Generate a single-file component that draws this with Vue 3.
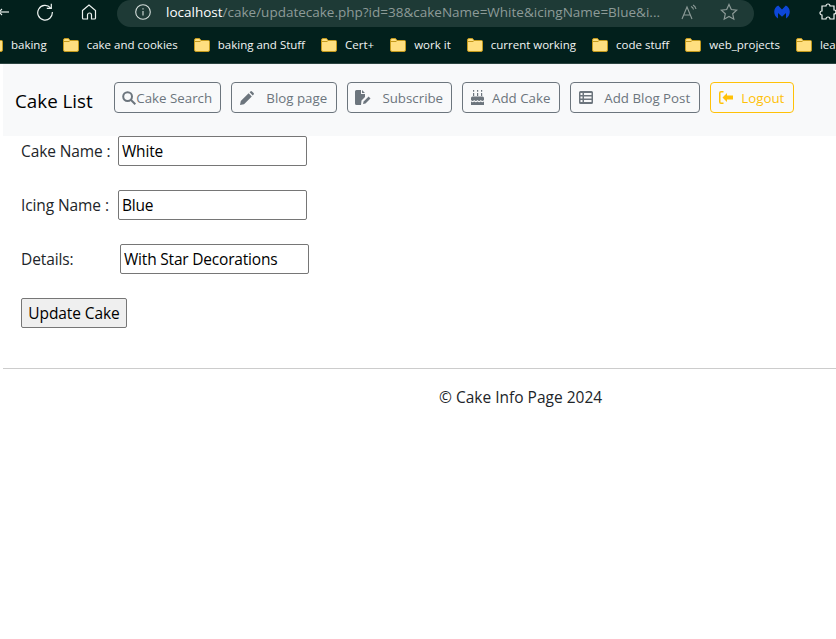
<script setup>
const bookmarks = ["baking", "cake and cookies", "baking and Stuff", "Cert+", "work it", "current working", "code stuff", "web_projects", "lea"];
// gap = afstand icoon-tekst, per knop anders in het origineel
const navButtons = [
  { label: "Cake Search", icon: "search", gap: 0, width: 107 },
  { label: "Blog page", icon: "pencil", gap: 12, width: 106 },
  { label: "Subscribe", icon: "file", gap: 11, width: 105 },
  { label: "Add Cake", icon: "cake", gap: 8, width: 98 },
  { label: "Add Blog Post", icon: "table", gap: 11, width: 130 },
  { label: "Logout", icon: "logout", gap: 8, width: 84, warn: true },
];
</script>

<template>
  <div class="page">
    <header class="browser">
      <div class="toolbar">
        <svg class="back" width="10" height="14" viewBox="0 0 10 14" fill="none" stroke="#e8eeec" stroke-width="1.2">
          <path d="M0 7h9" />
          <path d="M2 4L-1 7l3 3" />
        </svg>
        <svg class="reload" width="18" height="18" viewBox="0 0 18 18" fill="none" stroke="#eef3f1" stroke-width="1.2">
          <path d="M14.6 5A7.300 7.300 0 1 0 16.300 9" />
          <path d="M15.300 .8V5.300h-4.500" />
        </svg>
        <svg class="home" width="18" height="18" viewBox="0 0 18 18" fill="none" stroke="#eef3f1" stroke-width="1.2">
          <path d="M2.500 7.500L9 2l6.500 5.500V15a1 1 0 0 1-1 1h-3v-4a2 2 0 0 0-4 0v4H3.500a1 1 0 0 1-1-1z" />
        </svg>
        <div class="url-pill">
          <svg class="info" width="16" height="16" viewBox="0 0 16 16" fill="none" stroke="#d5dedb" stroke-width="1.100">
            <circle cx="8" cy="8" r="7.300" />
            <path d="M8 7v4.500M8 4.200v1.300" />
          </svg>
          <span class="url"><b>localhost</b>/cake/updatecake.php?id=38&amp;cakeName=White&amp;icingName=Blue&amp;i...</span>
          <svg class="read" width="16" height="16" viewBox="0 0 16 16" fill="none" stroke="#8d9b98" stroke-width="1.100">
            <path d="M1 15L6 3l5 12M3 11h6" />
            <path d="M10 2.500a4 4 0 0 1 2.500 3M12 1a6 6 0 0 1 3 4" />
          </svg>
          <svg class="star" width="18" height="18" viewBox="0 0 18 18" fill="none" stroke="#8d9b98" stroke-width="1.200">
            <path d="M9 1.500l2.300 5 5.400.6-4 3.700 1.100 5.400L9 13.500l-4.800 2.700 1.100-5.400-4-3.700 5.400-.6z" />
          </svg>
        </div>
        <svg class="malware" width="16" height="14" viewBox="0 0 16 14">
          <path d="M8 4.500L4.200.6C1.800 1.700.2 4 .2 6.800c0 2.800 1.500 5.300 3.800 6.700V8l4 3.800L12 8v5.500c2.300-1.400 3.800-3.900 3.800-6.700 0-2.800-1.600-5.100-4-6.200z" fill="#0d47d9" />
        </svg>
        <svg class="puzzle" width="18" height="18" viewBox="0 0 18 18" fill="none" stroke="#f0f4f2" stroke-width="1.200">
          <path d="M7 3a2 2 0 1 1 4 0h4v4a2 2 0 1 1 0 4v5h-4a2 2 0 1 0-4 0H3v-4a2 2 0 1 1 0-4V3z" />
        </svg>
      </div>
      <div class="bookmarks">
        <div v-for="b in bookmarks" :key="b" class="bookmark">
          <svg width="16" height="14" viewBox="0 0 16 14">
            <path d="M.5 2A1.500 1.500 0 0 1 2 .5h3.500L7 2.500h7.500a1 1 0 0 1 1 1V12a1.500 1.500 0 0 1-1.500 1.500H2A1.500 1.500 0 0 1 .5 12z" fill="#ffdf80" stroke="#c49a1c" />
            <path d="M1 3.500h5.500" stroke="#c49a1c" fill="none" />
          </svg>
          <span>{{ b }}</span>
        </div>
      </div>
    </header>

    <nav class="navbar">
      <a class="brand">Cake List</a>
      <div class="nav-btns">
        <button
          v-for="btn in navButtons"
          :key="btn.label"
          class="nav-btn"
          :class="{ warn: btn.warn }"
          :style="{ gap: btn.gap + 'px', width: btn.width + 'px' }"
        >
          <svg v-if="btn.icon === 'search'" width="14" height="14" viewBox="0 0 14 14" fill="none" stroke="currentColor" stroke-width="2">
            <circle cx="5.600" cy="5.600" r="4.400" />
            <path d="M9 9l4.300 4.300" />
          </svg>
          <svg v-if="btn.icon === 'pencil'" width="14" height="14" viewBox="0 0 14 14" fill="currentColor">
            <path d="M0 14l.8-4L8.600 2.200l3.200 3.200L4 13.200zM9.600 1.200l.8-.8a1.200 1.200 0 0 1 1.600 0l1.600 1.600a1.200 1.200 0 0 1 0 1.600l-.8.800z" />
          </svg>
          <svg v-if="btn.icon === 'file'" width="16" height="15" viewBox="0 0 16 15" fill="currentColor">
            <path d="M0 1.500A1.500 1.500 0 0 1 1.500 0H6v4h4v3l-3.500 3.500L6 15H1.500A1.500 1.500 0 0 1 0 13.500zM7 0l3 3H7z" />
            <path d="M8 14l.6-2.500 5-5 1.900 1.900-5 5z" />
          </svg>
          <svg v-if="btn.icon === 'cake'" width="13" height="15" viewBox="0 0 13 15" fill="currentColor">
            <path d="M2 0h1.200v1.800H2zM6 0h1.200v1.800H6zM10 0h1.200v1.800H10zM2 3h1.200v3H2zM6 3h1.200v3H6zM10 3h1.200v3H10z" />
            <path d="M1.500 6.500h10A1.500 1.500 0 0 1 13 8v2c-1.300 1.200-2 1.200-3.200 0-1.100 1.200-2.100 1.200-3.300 0-1.100 1.200-2.100 1.200-3.300 0C2 11.200 1.300 11.200 0 10V8a1.500 1.500 0 0 1 1.500-1.500zM0 11.500c1.500 1 2.200 1 3.200 0 1.100 1 2.200 1 3.300 0 1.100 1 2.200 1 3.300 0 1 1 1.700 1 3.200 0V15H0z" />
          </svg>
          <svg v-if="btn.icon === 'table'" width="14" height="13" viewBox="0 0 14 13" fill="currentColor">
            <path fill-rule="evenodd" d="M1.500 0h11A1.500 1.500 0 0 1 14 1.500v10a1.500 1.500 0 0 1-1.500 1.500h-11A1.500 1.500 0 0 1 0 11.500v-10A1.500 1.500 0 0 1 1.500 0zM1.500 2v2h2V2zm0 3.500v2h2v-2zm0 3.500v2h2V9zM5 2v2h7.500V2zm0 3.500v2h7.500v-2zM5 9v2h7.500V9z" />
          </svg>
          <svg v-if="btn.icon === 'logout'" width="14" height="13" viewBox="0 0 14 13" fill="currentColor">
            <path d="M4.500 0v1.500H2A.5.5 0 0 0 1.500 2v9a.5.5 0 0 0 .5.5h2.500V13H2a2 2 0 0 1-2-2V2a2 2 0 0 1 2-2z" />
            <path d="M3.500 6.500L8 2v2.500h6v4H8V11z" />
          </svg>
          <span>{{ btn.label }}</span>
        </button>
      </div>
    </nav>

    <form class="cake-form" @submit.prevent>
      <div class="field">
        <label class="field-label">Cake Name :</label>
        <input value="White" />
      </div>
      <div class="field">
        <label class="field-label">Icing Name :</label>
        <input value="Blue" />
      </div>
      <div class="field details">
        <label class="field-label">Details:</label>
        <input value="With Star Decorations" />
      </div>
      <button class="submit">Update Cake</button>
    </form>

    <footer class="footer">© Cake Info Page 2024</footer>
  </div>
</template>

<style scoped>
.page {
  width: 836px;
  height: 639px;
  overflow: hidden;
  background: #fff;
  color: #212529;
  font-family: "Open Sans", "Noto Sans", sans-serif;
}
.browser {
  height: 64px;
  box-sizing: border-box;
  background: #02201c;
  border-bottom: 1px solid #2c4541;
}
.toolbar {
  height: 24px;
  display: flex;
  align-items: center;
}
.toolbar > svg {
  flex-shrink: 0;
}
.back {
  overflow: visible;
}
.reload {
  margin-left: 26px;
}
.home {
  margin-left: 26px;
}
.url-pill {
  margin-left: 19px;
  width: 637px;
  height: 27px;
  flex-shrink: 0;
  margin-bottom: -3px;
  padding: 0 0 3px 18px;
  box-sizing: border-box;
  border-radius: 14px;
  background: #1e3a36;
  display: flex;
  align-items: center;
}
.url {
  margin-left: 15px;
  width: 515px;
  font-size: 13.5px;
  white-space: nowrap;
  color: #8d9b98;
}
.url b {
  color: #fff;
  font-weight: 400;
}
.read {
  flex-shrink: 0;
}
.star {
  flex-shrink: 0;
  margin-left: 23px;
}
.malware {
  margin-left: 20px;
}
.puzzle {
  margin-left: 29px;
}
.bookmarks {
  height: 39px;
  box-sizing: border-box;
  padding-top: 2px;
  display: flex;
  align-items: center;
  gap: 16px;
  margin-left: -13px;
  white-space: nowrap;
  font-size: 11.5px;
  color: #f2f5f4;
}
.bookmark {
  display: flex;
  align-items: center;
  gap: 8px;
}
.navbar {
  margin-left: 3px;
  height: 72px;
  background: #f8f9fa;
  display: flex;
  align-items: flex-start;
  padding: 18px 0 0 12px;
  box-sizing: border-box;
}
.brand {
  font-size: 18.8px;
  line-height: 26px;
  margin-top: 6px;
  color: #000;
  margin-right: 21px;
}
.nav-btns {
  display: flex;
  gap: 10px;
}
.nav-btn {
  height: 31px;
  padding: 0;
  display: flex;
  align-items: center;
  justify-content: center;
  background: transparent;
  border: 1px solid #6c757d;
  border-radius: 4px;
  color: #6c757d;
  font-family: inherit;
  font-size: 13.3px;
  white-space: nowrap;
}
.nav-btn.warn {
  border-color: #ffc107;
  color: #ffc107;
}
.cake-form {
  padding: 0 0 0 21px;
  font-size: 15.5px;
  letter-spacing: -0.1px;
}
.field {
  height: 30px;
  display: flex;
  align-items: center;
  margin-bottom: 24px;
}
.field-label {
  width: 97px;
}
.details .field-label {
  width: 99px;
}
input {
  width: 189px;
  height: 30px;
  box-sizing: border-box;
  padding: 1px 3px;
  border: 1px solid #767676;
  border-radius: 2px;
  font-family: inherit;
  font-size: 15.5px;
  letter-spacing: -0.2px;
  color: #000;
}
.submit {
  display: block;
  height: 30px;
  width: 106px;
  padding: 0;
  border: 1px solid #767676;
  border-radius: 2px;
  background: #efefef;
  font-family: inherit;
  font-size: 15.5px;
  letter-spacing: -0.1px;
  color: #000;
}
.footer {
  margin: 40px 0 0 3px;
  border-top: 1px solid #ccc;
  padding: 17px 0 0 436px;
  font-size: 15.5px;
}
</style>
